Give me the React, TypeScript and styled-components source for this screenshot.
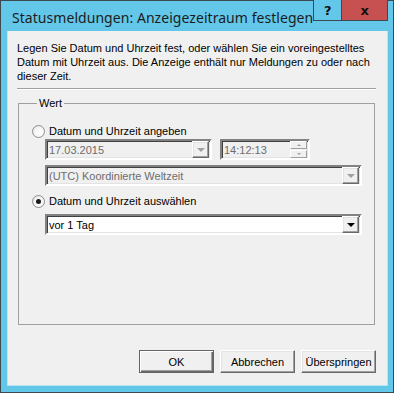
import React from 'react';
import styled, { createGlobalStyle } from 'styled-components';

const GlobalStyle = createGlobalStyle`
  html, body {
    margin: 0;
    padding: 0;
    background: #ffffff;
  }
  body {
    font-family: Tahoma, "DejaVu Sans", sans-serif;
  }
`;

const Window = styled.div`
  width: 394px;
  height: 393px;
  box-sizing: border-box;
  border: 1px solid #3c4a50;
  background: #63c7e9;
  display: flex;
  flex-direction: column;
`;

const TitleBar = styled.div`
  height: 30px;
  display: flex;
  align-items: flex-start;
  padding-left: 11px;
  padding-right: 5px;
`;

const Title = styled.div`
  font-family: "Noto Sans", "Open Sans", sans-serif;
  font-size: 14px;
  letter-spacing: 0.05px;
  color: #1c1c1c;
  line-height: 20px;
  margin-top: 7px;
  white-space: nowrap;
`;

const CaptionButtons = styled.div`
  margin-left: auto;
  margin-top: -1px;
  display: flex;
  border: 1px solid #3c4a50;
  border-top: none;
`;

const CaptionButton = styled.div<{ $close?: boolean }>`
  width: ${({ $close }) => ($close ? 45 : 27)}px;
  height: 20px;
  background: ${({ $close }) => ($close ? '#c75050' : '#63c7e9')};
  border-left: ${({ $close }) => ($close ? '1px solid #3c4a50' : 'none')};
  display: flex;
  align-items: center;
  justify-content: center;
  font-family: "DejaVu Sans", sans-serif;
  font-weight: bold;
  font-size: 13px;
  color: #111;
`;

const Client = styled.div`
  flex: 1;
  margin: 0 5px 6px 6px;
  background: #f0f0f0;
  border: 1px solid #b8e4f3;
  border-top: none;
  display: flex;
  flex-direction: column;
  padding: 10px 11px 12px 9px;
  font-family: "Liberation Sans", Tahoma, sans-serif;
  font-size: 11px;
  color: #000;
`;

const Description = styled.p`
  margin: 0;
  line-height: 14px;
`;

const Separator = styled.div`
  margin-top: 5px;
  height: 1px;
  background: #a0a0a0;
  border-bottom: 1px solid #ffffff;
`;

const Group = styled.fieldset`
  flex: 1;
  margin: 7px 1px 0 1px;
  padding: 0 12px 0 13px;
  border: 1px solid #a0a0a0;
  display: flex;
  flex-direction: column;
`;

const Legend = styled.legend`
  padding: 0 2px;
  margin-left: 5px;
  line-height: 13px;
`;

const RadioRow = styled.label<{ $top: number }>`
  display: flex;
  align-items: center;
  gap: 4px;
  height: 14px;
  margin-top: ${({ $top }) => $top}px;
`;

const RadioCircle = styled.span<{ $checked?: boolean }>`
  width: 11px;
  height: 11px;
  border-radius: 50%;
  border: 1px solid #8e8f8f;
  background: radial-gradient(circle at 60% 60%, #ffffff 0%, #f4f4f4 55%, #d6d6d6 100%);
  display: flex;
  align-items: center;
  justify-content: center;
  &::after {
    content: '';
    width: 5px;
    height: 5px;
    border-radius: 50%;
    background: ${({ $checked }) => ($checked ? '#1a1a1a' : 'transparent')};
  }
`;

const FieldRow = styled.div<{ $top: number }>`
  display: flex;
  gap: 8px;
  margin-top: ${({ $top }) => $top}px;
  padding-left: 13px;
`;

const Field = styled.div<{ $width?: number; $disabled?: boolean }>`
  box-sizing: border-box;
  height: 21px;
  width: ${({ $width }) => ($width ? `${$width}px` : '100%')};
  flex: ${({ $width }) => ($width ? 'none' : '1')};
  border-style: solid;
  border-width: 2px;
  border-color: #828282 #ffffff #ffffff #828282;
  box-shadow: inset 1px 1px 0 #404040, inset -1px -1px 0 #e3e3e3;
  background: ${({ $disabled }) => ($disabled ? '#f0f0f0' : '#ffffff')};
  color: ${({ $disabled }) => ($disabled ? '#6d6d6d' : '#000000')};
  display: flex;
  align-items: center;
  padding-left: 2px;
  padding-right: 1px;
  line-height: 14px;
`;

const FieldText = styled.span`
  flex: 1;
  white-space: nowrap;
  overflow: hidden;
`;

const DropButton = styled.div<{ $disabled?: boolean }>`
  box-sizing: border-box;
  width: 17px;
  height: 17px;
  background: #f0f0f0;
  border: 1px solid;
  border-color: #ffffff #696969 #696969 #ffffff;
  box-shadow: inset -1px -1px 0 #a0a0a0, inset 1px 1px 0 #e3e3e3;
  display: flex;
  align-items: center;
  justify-content: center;
  &::after {
    content: '';
    width: 0;
    height: 0;
    border-left: 4px solid transparent;
    border-right: 4px solid transparent;
    border-top: 4px solid ${({ $disabled }) => ($disabled ? '#a0a0a0' : '#000000')};
  }
`;

const Spin = styled.div`
  display: flex;
  flex-direction: column;
  gap: 1px;
  width: 17px;
`;

const SpinButton = styled.div<{ $up?: boolean }>`
  box-sizing: border-box;
  height: 8px;
  border: 1px solid;
  border-color: #ffffff #a0a0a0 #a0a0a0 #ffffff;
  display: flex;
  align-items: center;
  justify-content: center;
  &::after {
    content: '';
    border-left: 2px solid transparent;
    border-right: 2px solid transparent;
    ${({ $up }) => ($up ? 'border-bottom: 2px solid #a0a0a0;' : 'border-top: 2px solid #a0a0a0;')}
  }
`;

const ButtonBar = styled.div`
  margin-top: 25px;
  display: flex;
  justify-content: flex-end;
  gap: 6px;
`;

const Button = styled.button<{ $default?: boolean }>`
  box-sizing: border-box;
  width: 75px;
  height: 23px;
  padding: 0;
  font-family: "Liberation Sans", Tahoma, sans-serif;
  font-size: 11px;
  color: #000;
  background: #f0f0f0;
  border: 1px solid;
  border-color: ${({ $default }) =>
    $default ? '#646464' : '#ffffff #696969 #696969 #ffffff'};
  box-shadow: ${({ $default }) =>
    $default
      ? 'inset 1px 1px 0 #ffffff, inset -1px -1px 0 #696969, inset -2px -2px 0 #a0a0a0'
      : 'inset -1px -1px 0 #a0a0a0, inset 1px 1px 0 #e3e3e3'};
`;

export default function App() {
  return (
    <>
      <GlobalStyle />
      <Window>
        <TitleBar>
          <Title>Statusmeldungen: Anzeigezeitraum festlegen</Title>
          <CaptionButtons>
            <CaptionButton>?</CaptionButton>
            <CaptionButton $close>x</CaptionButton>
          </CaptionButtons>
        </TitleBar>
        <Client>
          <Description>
            Legen Sie Datum und Uhrzeit fest, oder wählen Sie ein voreingestelltes
            Datum mit Uhrzeit aus. Die Anzeige enthält nur Meldungen zu oder nach
            dieser Zeit.
          </Description>
          <Separator />
          <Group>
            <Legend>Wert</Legend>
            <RadioRow $top={14}>
              <RadioCircle />
              Datum und Uhrzeit angeben
            </RadioRow>
            <FieldRow $top={1}>
              <Field $width={167} $disabled>
                <FieldText>17.03.2015</FieldText>
                <DropButton $disabled />
              </Field>
              <Field $width={90} $disabled>
                <FieldText>14:12:13</FieldText>
                <Spin>
                  <SpinButton $up />
                  <SpinButton />
                </Spin>
              </Field>
            </FieldRow>
            <FieldRow $top={5}>
              <Field $disabled>
                <FieldText>(UTC) Koordinierte Weltzeit</FieldText>
                <DropButton $disabled />
              </Field>
            </FieldRow>
            <RadioRow $top={8}>
              <RadioCircle $checked />
              Datum und Uhrzeit auswählen
            </RadioRow>
            <FieldRow $top={6}>
              <Field>
                <FieldText>vor 1 Tag</FieldText>
                <DropButton />
              </Field>
            </FieldRow>
          </Group>
          <ButtonBar>
            <Button $default>OK</Button>
            <Button>Abbrechen</Button>
            <Button>Überspringen</Button>
          </ButtonBar>
        </Client>
      </Window>
    </>
  );
}
